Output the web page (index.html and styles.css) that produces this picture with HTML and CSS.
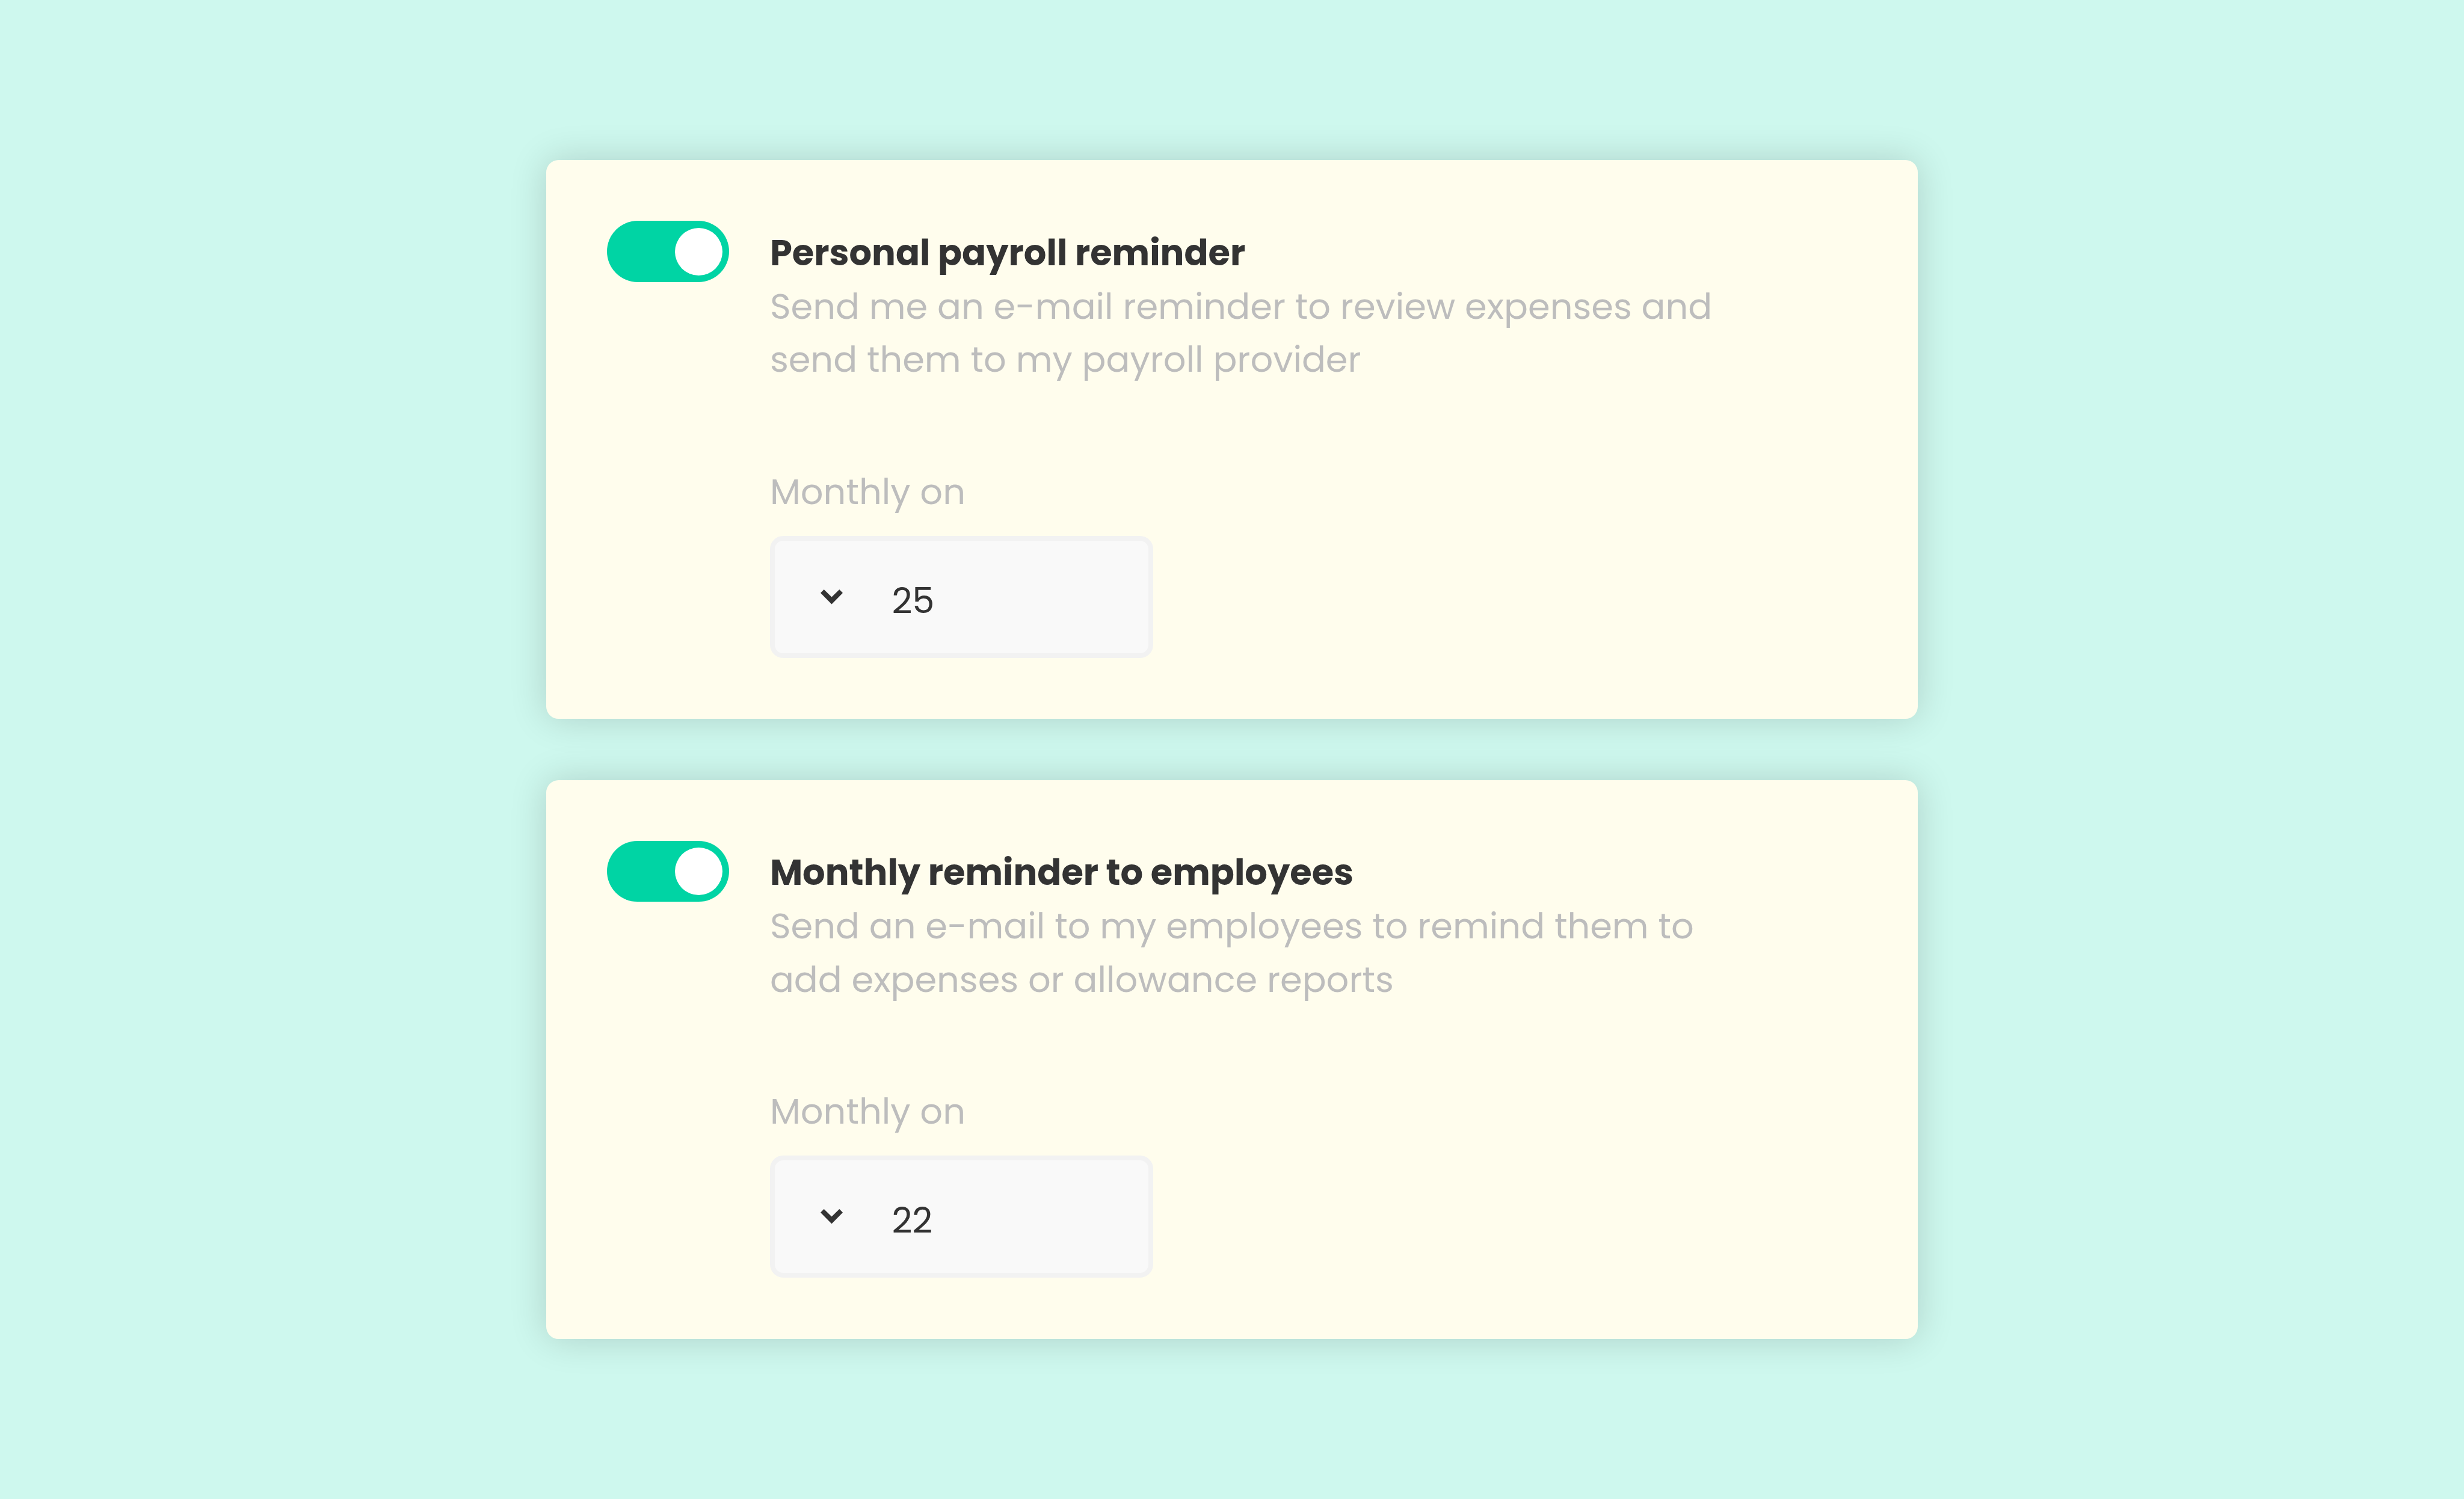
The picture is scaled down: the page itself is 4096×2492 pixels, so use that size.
FILE: index.html
```html
<!DOCTYPE html>
<html lang="en">
<head>
<meta charset="utf-8">
<title>Reminders</title>
<link rel="stylesheet" href="styles.css">
</head>
<body>
<main class="page">
  <section class="card">
    <div class="toggle"><span class="knob"></span></div>
    <div class="content">
      <h2 class="title">Personal payroll reminder</h2>
      <p class="description">Send me an e-mail reminder to review expenses and<br>send them to my payroll provider</p>
      <div class="label">Monthly on</div>
      <div class="select">
        <svg class="chevron" viewBox="0 0 130 86"><path d="M0 20 20 0 65 44 110 0 130 20 65 86Z"/></svg>
        <span class="value">25</span>
      </div>
    </div>
  </section>
  <section class="card">
    <div class="toggle"><span class="knob"></span></div>
    <div class="content">
      <h2 class="title">Monthly reminder to employees</h2>
      <p class="description">Send an e-mail to my employees to remind them to<br>add expenses or allowance reports</p>
      <div class="label">Monthly on</div>
      <div class="select">
        <svg class="chevron" viewBox="0 0 130 86"><path d="M0 20 20 0 65 44 110 0 130 20 65 86Z"/></svg>
        <span class="value">22</span>
      </div>
    </div>
  </section>
</main>
</body>
</html>
```
FILE: styles.css
```css
* { box-sizing: border-box; margin: 0; padding: 0; }
body {
  background: #cef8ee;
  color: #333;
  font-family: Poppins, Inter, sans-serif;
  font-size: 59.1px;
  line-height: 88.75px;
}
.page {
  width: 4096px;
  height: 2492px;
  display: flex;
  flex-direction: column;
  align-items: center;
  justify-content: center;
  gap: 101.4px;
}
.card {
  width: 2280px;
  height: 929px;
  padding: 101.2px;
  display: flex;
  gap: 67.7px;
  background: #fffded;
  border-radius: 20.5px;
  box-shadow: 0 0 62px rgba(0, 0, 0, 0.16);
}
.toggle {
  width: 203px;
  height: 101.5px;
  padding: 11.3px;
  display: flex;
  justify-content: flex-end;
  border-radius: 51px;
  background: #00d4a4;
}
.knob { width: 79px; height: 79px; border-radius: 50%; background: #fff; }
.content { padding-top: 9.4px; }
.title { font-size: inherit; font-weight: 700; }
.description { color: #bdbdbd; }
.label { margin-top: 130.5px; color: #bdbdbd; }
.select {
  width: 637.3px;
  height: 202.6px;
  margin-top: 28.6px;
  padding-left: 76px;
  display: flex;
  align-items: center;
  gap: 81.5px;
  background: #f9f9f9;
  border: 8.5px solid #f2f2f2;
  border-radius: 22px;
}
.chevron { width: 37px; height: 24.5px; fill: #333; }
.value { padding-top: 14px; color: #333; }
```
